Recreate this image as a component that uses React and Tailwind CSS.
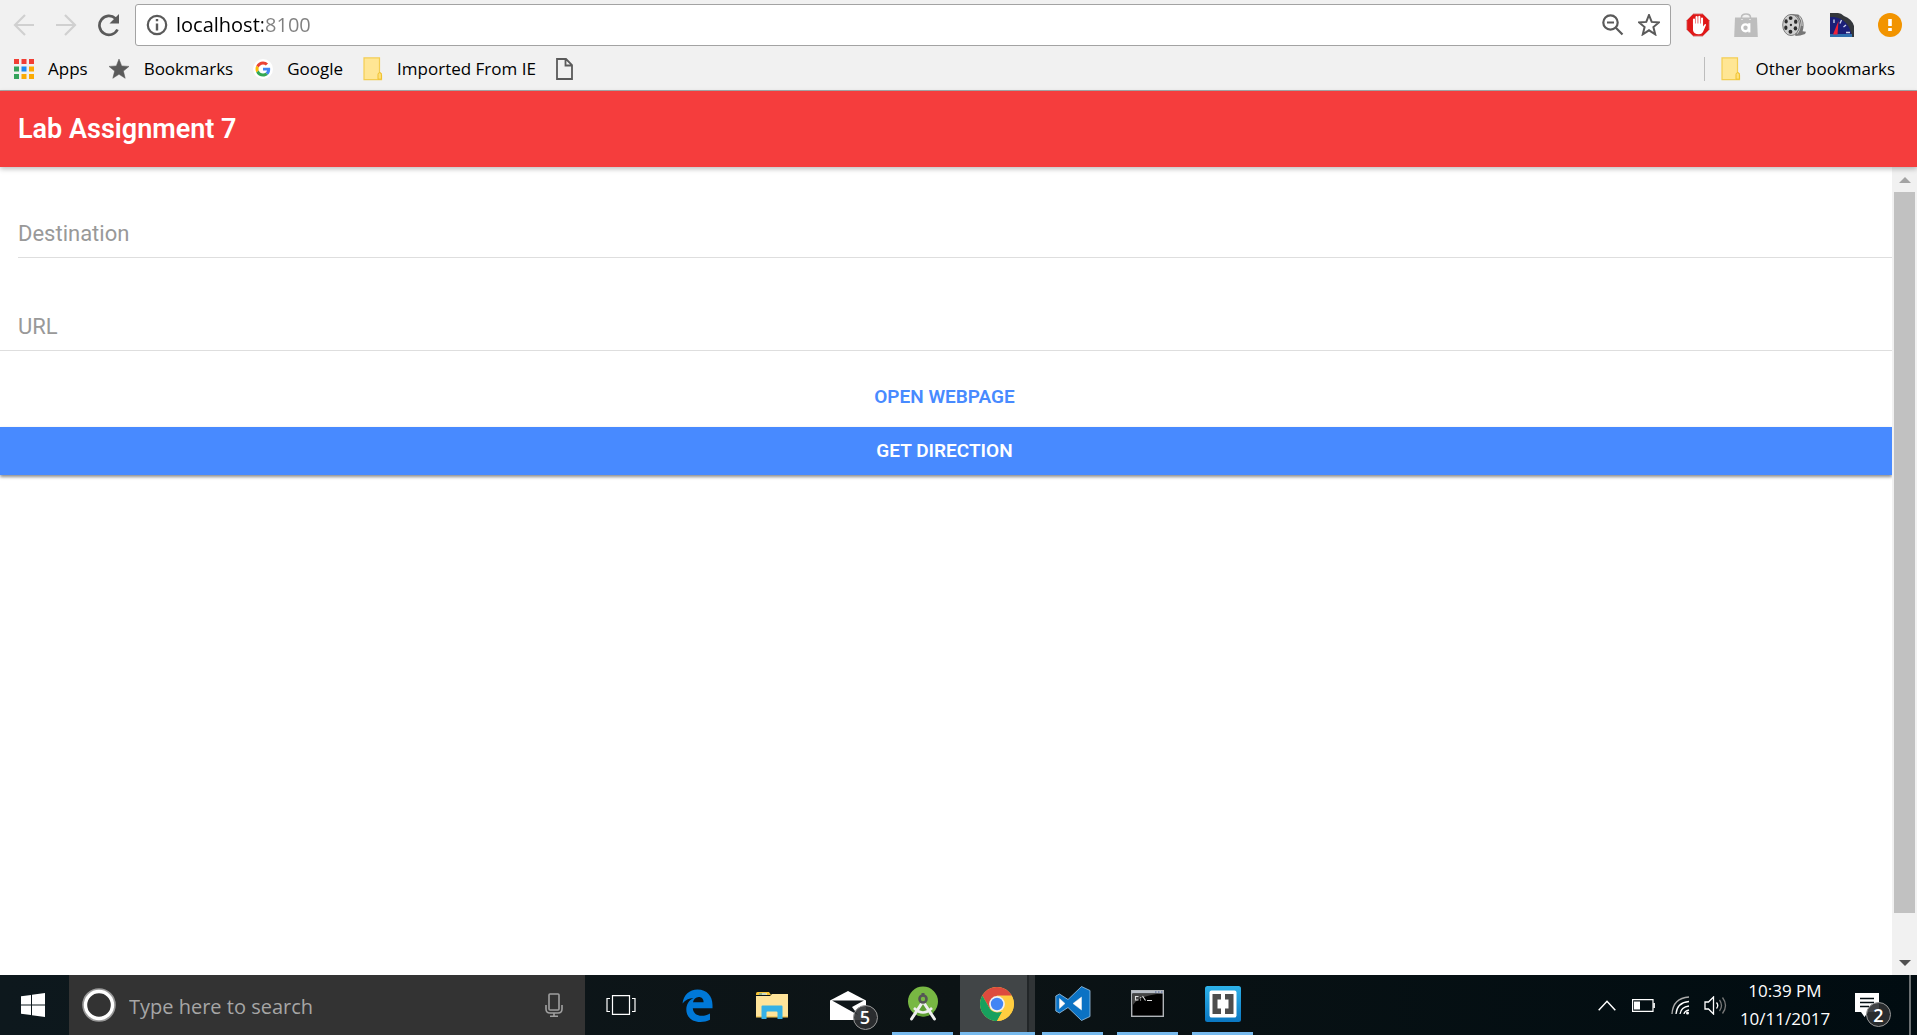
import React, { useState } from "react";

const UI = "font-['Open_Sans','Noto_Sans',sans-serif]";

function FolderIcon() {
  return (
    <svg width="20" height="24" viewBox="0 0 20 26" preserveAspectRatio="none" className="shrink-0">
      <path d="M1 1h15.500v16q2 0 2 3v4.500h-17.500z" fill="#ffe694" stroke="#f3cd52" strokeWidth="1.200" />
      <path d="M15 24v-5q0-2 1.700-2t1.700 2v5z" fill="#ffe07a" stroke="#eebf2b" />
    </svg>
  );
}

function BackIcon({ flip }) {
  return (
    <svg width="22" height="24" viewBox="0 0 22 24" className={flip ? "-scale-x-100" : ""} fill="none" stroke="#d0d0d0" strokeWidth="2.200">
      <path d="M21 12H2M12 2 2 12l10 10" />
    </svg>
  );
}

function ReloadIcon() {
  return (
    <svg width="24" height="24" viewBox="0 0 24 24">
      <path d="M20.500 16.500A9.500 9.500 0 1 1 18.500 5.500" fill="none" stroke="#5a5a5a" strokeWidth="2.700" />
      <path d="M22 1v9.500h-9.500z" fill="#5a5a5a" />
    </svg>
  );
}

function InfoIcon() {
  return (
    <svg width="22" height="22" viewBox="0 0 22 22" className="shrink-0" fill="none" stroke="#5a5a5a" strokeWidth="2.200">
      <circle cx="11" cy="11" r="9.200" />
      <path d="M11 9.500v7M11 5v2.300" strokeWidth="2.400" />
    </svg>
  );
}

function ZoomOutIcon() {
  return (
    <svg width="22" height="22" viewBox="0 0 22 22" fill="none" stroke="#5a5a5a" strokeWidth="2.200">
      <circle cx="8.500" cy="8.500" r="7.200" />
      <path d="M5 8.500h7M13.800 13.800l6.700 6.700" />
    </svg>
  );
}

const STAR = "M11 1l2.700 6.900 7.300.5-5.600 4.700 1.800 7.200L11 16.300l-6.200 4 1.800-7.200L1 8.400l7.300-.5z";

function StarIcon({ filled }) {
  return (
    <svg width="22" height="22" viewBox="0 0 22 22" className="shrink-0">
      <path d={STAR} fill={filled ? "#5a5a5a" : "none"} stroke="#5a5a5a" strokeWidth={filled ? 0.5 : 2} />
    </svg>
  );
}

function AppsIcon() {
  const colors = ["#f23e34", "#f23e34", "#f23e34", "#34a35b", "#1e88f0", "#fbab05", "#34a35b", "#fbab05", "#fbab05"];
  return (
    <svg width="20" height="20" viewBox="0 0 20 20" className="shrink-0">
      {colors.map((c, i) => (
        <rect key={i} x={(i % 3) * 7.500} y={Math.floor(i / 3) * 7.500} width="5" height="5" fill={c} />
      ))}
    </svg>
  );
}

function GoogleIcon() {
  return (
    <svg width="20" height="20" viewBox="0 0 48 48" className="shrink-0">
      <circle cx="24" cy="24" r="24" fill="#fff" />
      <g transform="translate(6 6) scale(.75)">
        <path fill="#EA4335" d="M24 9.500c3.500 0 6.700 1.200 9.200 3.600l6.900-6.900C35.900 2.400 30.500 0 24 0 14.600 0 6.500 5.400 2.600 13.200l8 6.200C12.400 13.700 17.700 9.500 24 9.500z" />
        <path fill="#4285F4" d="M47 24.500c0-1.600-.2-3.100-.4-4.500H24v9h12.900c-.6 3-2.300 5.500-4.800 7.200l7.700 6C44.400 38 47 31.800 47 24.500z" />
        <path fill="#FBBC05" d="M10.500 28.600c-.5-1.500-.8-3-.8-4.600s.3-3.100.8-4.600l-8-6.200C.9 16.500 0 20.100 0 24s.9 7.500 2.600 10.800z" />
        <path fill="#34A853" d="M24 48c6.500 0 11.900-2.100 15.900-5.800l-7.700-6c-2.200 1.400-4.900 2.300-8.200 2.300-6.300 0-11.600-4.200-13.500-9.900l-8 6.200C6.500 42.600 14.600 48 24 48z" />
      </g>
    </svg>
  );
}

function PageIcon() {
  return (
    <svg width="17" height="22" viewBox="0 0 17 22" fill="none" stroke="#5a5a5a" strokeWidth="1.800">
      <path d="M1 1h9l6 6v14H1zM9.500 1v6.500H16" />
    </svg>
  );
}

function BlockerIcon() {
  return (
    <svg width="24" height="24" viewBox="0 0 24 24">
      <path d="M7.200.8h9.600l6.500 6.500v9.400l-6.500 6.500H7.200L.7 16.700V7.300z" fill="#e01818" stroke="#d9b0b0" strokeWidth=".8" />
      <path d="M8 12V6.500M10.600 11V4M13.300 11V3.800M16 12V5.500" stroke="#fff" strokeWidth="2.100" strokeLinecap="round" />
      <path d="M7 10.500h10v3l1.500-2q1.300-.9 1.600.3l-2.800 6.500q-1.200 3-4.400 3-5.300 0-5.900-4z" fill="#fff" />
    </svg>
  );
}

function BagIcon() {
  return (
    <svg width="24" height="24" viewBox="0 0 24 24">
      <path d="M7.500 7V4.500q0-3.500 4.500-3.500t4.500 3.500V7" fill="none" stroke="#bdbdbd" strokeWidth="1.600" />
      <path d="M1 4.500h22l.8 19.500H.2z" fill="#bdbdbd" />
      <path d="M7.500 6.500h1M15.500 6.500h1" stroke="#fff" strokeWidth="1.200" />
      <circle cx="11.500" cy="14.800" r="3.400" fill="none" stroke="#fff" strokeWidth="2.400" />
      <path d="M15.300 10.200v9.200" stroke="#fff" strokeWidth="2.200" />
    </svg>
  );
}

function ReelIcon() {
  return (
    <svg width="24" height="24" viewBox="0 0 25 24">
      <path d="M9 .5 17 1q5.500 4 5.500 11 0 4-1 6.500l3.500.5-1 2.500q-5 2-10 2z" fill="#777" />
      <path d="M15 3q4 4 4 9t-3 9M18 3q3.500 4 3 10" fill="none" stroke="#ddd" />
      <ellipse cx="9.500" cy="12" rx="8.800" ry="11" fill="#cfcfcf" stroke="#777" />
      <g fill="#2b2b2b">
        <ellipse cx="9" cy="4.800" rx="2" ry="2" />
        <ellipse cx="14.300" cy="8.500" rx="1.800" ry="2.300" />
        <ellipse cx="14" cy="15.500" rx="1.800" ry="2.300" />
        <ellipse cx="8.800" cy="19" rx="2" ry="2" />
        <ellipse cx="4" cy="14.800" rx="1.700" ry="2.300" />
        <ellipse cx="4.300" cy="8.300" rx="1.700" ry="2.200" />
        <circle cx="9.300" cy="12" r="1.200" />
      </g>
    </svg>
  );
}

function GaugeIcon() {
  return (
    <svg width="24" height="24" viewBox="0 0 24 24">
      <path d="M0 0h8q3 0 6 3 8 3 10 10v11H0z" fill="#34373c" />
      <path d="M0 4h4q15 2 18 20H0z" fill="#1b1f78" />
      <path d="M0 21h22v3H0z" fill="#2f6fae" />
      <path d="M4 6.500v3.500M11.500 7 10 10.500M16 12l-2.500 2M20 19.500h-4" stroke="#cfd6ee" strokeWidth="1.300" />
      <path d="M8.500 8 3 21.500h4.500z" fill="#f02038" />
    </svg>
  );
}

function AlertIcon() {
  return (
    <svg width="24" height="24" viewBox="0 0 24 24">
      <circle cx="12" cy="12" r="12" fill="#f29400" />
      <path d="M12 6v7M12 15v3" stroke="#fff" strokeWidth="3.600" />
    </svg>
  );
}

function IconButton({ label, className = "", children }) {
  return (
    <button type="button" aria-label={label} className={`flex shrink-0 items-center justify-center ${className}`}>
      {children}
    </button>
  );
}

function Bookmark({ icon, children }) {
  return (
    <a href="#" className="flex items-center gap-3.5 whitespace-nowrap">
      {icon}
      {children}
    </a>
  );
}

function BrowserChrome() {
  const [url, setUrl] = useState("localhost:8100");
  return (
    <header className={`border-b border-[#a9a9a9] bg-[#f1f1f1] text-black ${UI}`}>
      <div className="flex h-[50px] items-center pr-[15px] pl-[13px]">
        <IconButton label="Back" className="w-[22px]"><BackIcon /></IconButton>
        <IconButton label="Forward" className="ml-5 w-[22px]"><BackIcon flip /></IconButton>
        <IconButton label="Reload" className="ml-5 w-6"><ReloadIcon /></IconButton>
        <div className="ml-3.5 flex h-[42px] flex-1 items-center rounded-[3px] border border-[#a3a3a3] bg-white px-2.5">
          <InfoIcon />
          <input
            aria-label="Address"
            value={url}
            onChange={(e) => setUrl(e.target.value)}
            className="ml-2 min-w-0 flex-1 bg-[linear-gradient(90deg,#000_0_87px,#808080_87px)] bg-clip-text text-[20px] text-transparent outline-none"
          />
          <IconButton label="Zoom"><ZoomOutIcon /></IconButton>
          <IconButton label="Bookmark this page" className="ml-3.5"><StarIcon /></IconButton>
        </div>
        <div className="ml-[15px] flex items-center gap-6">
          <IconButton label="Ad blocker"><BlockerIcon /></IconButton>
          <IconButton label="Shopping assistant"><BagIcon /></IconButton>
          <IconButton label="Video downloader"><ReelIcon /></IconButton>
          <IconButton label="Speed dial"><GaugeIcon /></IconButton>
          <IconButton label="Menu"><AlertIcon /></IconButton>
        </div>
      </div>
      <nav aria-label="Bookmarks" className="flex h-10 items-center gap-5 pr-[22px] pb-0.5 pl-3.5 text-[17px]">
        <Bookmark icon={<AppsIcon />}>Apps</Bookmark>
        <Bookmark icon={<StarIcon filled />}>Bookmarks</Bookmark>
        <Bookmark icon={<GoogleIcon />}>Google</Bookmark>
        <Bookmark icon={<FolderIcon />}>Imported From IE</Bookmark>
        <a href="#" aria-label="Untitled bookmark"><PageIcon /></a>
        <div className="ml-auto flex items-center gap-4">
          <div className="h-6 w-px bg-[#bdbdbd]" />
          <Bookmark icon={<FolderIcon />}>Other bookmarks</Bookmark>
        </div>
      </nav>
    </header>
  );
}

function Scrollbar() {
  return (
    <div className="flex w-[25px] shrink-0 flex-col items-center bg-[#f1f1f1]">
      <button type="button" aria-label="Scroll up" className="flex h-[25px] w-full items-center justify-center">
        <svg width="12" height="6" viewBox="0 0 12 6"><path d="M0 6 6 0l6 6z" fill="#a3a3a3" /></svg>
      </button>
      <div className="flex w-full flex-1 flex-col px-0.5">
        <div className="grow-[721] bg-[#c1c1c1]" />
        <div className="grow-[37]" />
      </div>
      <button type="button" aria-label="Scroll down" className="flex h-[25px] w-full items-center justify-center">
        <svg width="12" height="6" viewBox="0 0 12 6"><path d="M0 0h12L6 6z" fill="#505050" /></svg>
      </button>
    </div>
  );
}

const FIELD = "h-12 w-full bg-transparent text-[22px] text-black outline-none placeholder:text-[#999] placeholder:opacity-100";

function Page() {
  return (
    <div className="flex min-h-0 flex-1 flex-col bg-white font-[Roboto,sans-serif]">
      <div className="z-10 flex h-[76px] shrink-0 items-center bg-[#f53d3d] px-[18px] shadow-[0_2px_5px_rgba(0,0,0,0.26)]">
        <h1 className="text-[27px] font-semibold text-white">Lab Assignment 7</h1>
      </div>
      <div className="flex min-h-0 flex-1">
        <main className="min-w-0 flex-1 pt-[42px]">
          <div className="pl-[18px]">
            <div className="border-b border-[#dedede]">
              <input aria-label="Destination" placeholder="Destination" className={FIELD} />
            </div>
          </div>
          <div className="mt-11 border-b border-[#dedede] pl-[18px]">
            <input aria-label="URL" placeholder="URL" className={FIELD} />
          </div>
          <button type="button" className="mt-[22px] flex h-12 w-full items-center justify-center pr-[3px] text-[19px] font-semibold text-[#488aff]">
            OPEN WEBPAGE
          </button>
          <button type="button" className="mt-1.5 flex h-12 w-full items-center justify-center bg-[#488aff] pr-[3px] text-[19px] font-semibold text-white shadow-[0_2px_3px_rgba(0,0,0,0.45)]">
            GET DIRECTION
          </button>
        </main>
        <Scrollbar />
      </div>
    </div>
  );
}

function Badge({ children }) {
  return (
    <span className="absolute -right-3 -bottom-2.5 flex size-[25px] items-center justify-center rounded-full border border-[#999] bg-[#2d3032]/90 text-lg leading-none font-semibold text-white">
      {children}
    </span>
  );
}

function TaskButton({ label, open, active, children }) {
  return (
    <button type="button" aria-label={label} className="flex w-[75px] shrink-0 flex-col">
      <span className={active ? "flex w-full flex-1 bg-[#303436]" : "flex w-full flex-1"}>
        <span className={active ? "mr-1.5 flex flex-1 items-center justify-center border-r-2 border-[#222628] bg-[#414547] pl-1.5" : "flex flex-1 items-center justify-center"}>
          {children}
        </span>
      </span>
      {open && <span className={active ? "h-[3px] w-full bg-[#76b9ed]" : "mx-auto h-[3px] w-[61px] bg-[#76b9ed]"} />}
    </button>
  );
}

function WindowsIcon() {
  return (
    <svg width="24" height="24" viewBox="0 0 24 24" fill="#fff">
      <path d="M0 3.300 10 2v9.500H0zM11 1.800 24 0v11.500H11zM0 12.500h10V22L0 20.700zM11 12.500h13V24l-13-1.800z" />
    </svg>
  );
}

function MicIcon() {
  return (
    <svg width="18" height="24" viewBox="0 0 18 24" fill="none" stroke="#a0a0a0" strokeWidth="1.600">
      <rect x="4" y="1" width="10" height="16" rx="1" />
      <path d="M1 12v4q0 4 4 4h8q4 0 4-4v-4M9 20v3M5 23.200h8" />
    </svg>
  );
}

function TaskViewIcon() {
  return (
    <svg width="30" height="20" viewBox="0 0 30 20" fill="none" stroke="#fff" strokeWidth="1.200">
      <path d="M6.500.6h17v18.800h-17zM4 3.500H1v13h3M26 3.500h3v13h-3" />
    </svg>
  );
}

function EdgeIcon() {
  return (
    <svg width="31" height="33" viewBox="0 0 31 33">
      <path d="M.5 14.500C1.500 6 7.500.5 15.500.5 25 .5 30.500 7 30.500 16v3.200H10.800c.3 5 4.200 7.600 8.900 7.600 3 0 5.700-.8 8.300-2.300v6.300c-3 1.500-6.200 2.200-9.700 2.200C10 33 4.300 28 4.300 20.500c0-5 2.600-9.200 7.200-11.500C6.800 9.200 3.200 11 .5 14.500zM11 13.200h10.600c0-3.200-1.600-5.300-4.900-5.300-3 0-5 2.100-5.700 5.300z" fill="#0078d7" />
    </svg>
  );
}

function ExplorerIcon() {
  return (
    <svg width="33" height="27" viewBox="0 0 33 27">
      <path d="M0 1.500Q0 0 1.500 0H13l2 3H0z" fill="#f8c535" />
      <path d="M3 2h7" stroke="#3ba7d8" />
      <path d="M6 2h5" stroke="#fff" />
      <path d="M0 4h14l2-2h16v23H0z" fill="#ffe49a" />
      <path d="M0 24h32v1.500H0z" fill="#f4cc63" />
      <path d="M5.500 14.500q0-1 1-1h19q1 0 1 1V27h-5v-6.500q0-1-1-1h-9q-1 0-1 1V27h-5z" fill="#35b1e6" />
    </svg>
  );
}

function MailIcon() {
  return (
    <svg width="36" height="29" viewBox="0 0 36 29">
      <path d="M0 9.500 18 0l18 9.500V29H0z" fill="#fff" />
      <path d="M2 9.500h32l-12 6.500 6 8z" fill="#10171a" />
    </svg>
  );
}

function AndroidStudioIcon() {
  return (
    <svg width="32" height="35" viewBox="0 0 32 35">
      <circle cx="16" cy="15.500" r="15" fill="#78b843" />
      <path d="M16 15.500 27 26A15 15 0 0 1 8 28z" fill="#5f9f33" />
      <path d="M15 17 4.500 33M17 17l10.500 16" stroke="#eee" strokeWidth="3" strokeLinecap="round" />
      <path d="M7 22q9 9 18 0" fill="none" stroke="#eee" strokeWidth="2.500" />
      <path d="M14.500 7h3v4h-3z" fill="#555" />
      <circle cx="16" cy="13" r="3.500" fill="#78b843" stroke="#555" strokeWidth="2.600" />
    </svg>
  );
}

function ChromeIcon() {
  return (
    <svg width="34" height="34" viewBox="0 0 34 34">
      <circle cx="17" cy="17" r="17" fill="#ffcd40" />
      <path d="M2.300 8.500A17 17 0 0 1 31.700 8.500H17L9.600 21.300z" fill="#dd4b3e" />
      <path d="M2.300 8.500 9.600 21.300Q12 25 17 25.500l5-.5L17 34A17 17 0 0 1 2.300 8.500z" fill="#17a05e" />
      <path d="M17 9h14.900A17 17 0 0 1 17 34l7.400-12.700z" fill="#ffcd40" />
      <circle cx="17" cy="17" r="7.900" fill="#f1f1f1" />
      <circle cx="17" cy="17" r="6.200" fill="#4285f4" />
    </svg>
  );
}

function CodeIcon() {
  return (
    <svg width="36" height="35" viewBox="0 0 36 35">
      <path fillRule="evenodd" d="M26.500.5 35 4.500v26l-8.500 4L13 21.500l-8.500 5.500L.8 25V10l3.700-2L13 13.500zM4.500 12.500v10L10 17.500zM26.500 11 18 17.500l8.500 6.500z" fill="#0b72c4" stroke="#9ec7e6" strokeWidth=".8" />
      <path d="M4.500 12.500v10L10 17.500zM26.500 11 18 17.500l8.500 6.500z" fill="#fff" />
    </svg>
  );
}

function TerminalIcon() {
  return (
    <svg width="33" height="27" viewBox="0 0 33 27">
      <rect x=".7" y=".7" width="31.600" height="25.600" fill="#000" stroke="#b0b4b8" strokeWidth="1.400" />
      <path d="M1 1h31v2.500H1z" fill="#b7bdc6" />
      <path d="M1.500 3.500H30Q6 6 1.500 16z" fill="#444" />
      <path d="M7.500 6.500H4.500v3.500h3M9.500 7.200v1M9.500 9.500v1M11.500 6l3 4.500M16 10.500h5" fill="none" stroke="#ddd" strokeWidth="1.100" />
      <path d="M24 2h1.500M27 2h1.500M30 2h1.500" stroke="#445a90" strokeWidth="1.200" />
    </svg>
  );
}

function BracketsIcon() {
  return (
    <svg width="36" height="36" viewBox="0 0 36 36">
      <defs>
        <linearGradient id="brackets" x1="0" y1="0" x2="0" y2="1">
          <stop offset="0" stopColor="#2db2ea" />
          <stop offset="1" stopColor="#0a77c2" />
        </linearGradient>
      </defs>
      <rect width="36" height="36" rx="2.500" fill="url(#brackets)" />
      <rect x="4.500" y="4.500" width="27" height="27" rx="2" fill="#fff" />
      <path d="M7.500 8H16v5.500h-3.500v9H16V28H7.500zM28.500 8H20v5.500h3.500v9H20V28h8.500z" fill="#4d4d4d" />
    </svg>
  );
}

function ActionCenterIcon() {
  return (
    <svg width="24" height="24" viewBox="0 0 24 24">
      <path d="M0 0h24v19H13l-3.500 5L6 19H0z" fill="#fff" />
      <path d="M5 5.500h14M5 9.500h14M5 13.500h9" stroke="#030d12" strokeWidth="1.300" />
    </svg>
  );
}

function Taskbar() {
  return (
    <footer className={`flex h-[60px] shrink-0 items-stretch bg-linear-to-r from-[#0d181d] via-[#0c1315] to-[#010c11] text-white ${UI}`}>
      <IconButton label="Start" className="w-[69px] pr-1"><WindowsIcon /></IconButton>
      <div className="flex w-[516px] shrink-0 items-center bg-[#333] pr-[22px] pl-[13px]">
        <svg width="34" height="34" viewBox="0 0 34 34" fill="none" className="shrink-0">
          <circle cx="17" cy="17" r="15.800" stroke="#999" strokeWidth="2" />
          <circle cx="17" cy="17" r="13.500" stroke="#fff" strokeWidth="3.400" />
        </svg>
        <input aria-label="Search" placeholder="Type here to search" className="ml-[13px] min-w-0 flex-1 bg-transparent pt-1 text-[20px] text-white outline-none placeholder:text-[#a6a6a6]" />
        <IconButton label="Voice search"><MicIcon /></IconButton>
      </div>
      <div className="flex">
        <TaskButton label="Task view"><span className="pr-1"><TaskViewIcon /></span></TaskButton>
      </div>
      <TaskButton label="Edge"><EdgeIcon /></TaskButton>
      <TaskButton label="File Explorer"><ExplorerIcon /></TaskButton>
      <TaskButton label="Mail">
        <span className="relative"><MailIcon /><Badge>5</Badge></span>
      </TaskButton>
      <TaskButton label="Android Studio" open><AndroidStudioIcon /></TaskButton>
      <TaskButton label="Chrome" open active><ChromeIcon /></TaskButton>
      <TaskButton label="Visual Studio Code" open><CodeIcon /></TaskButton>
      <TaskButton label="Command Prompt" open><TerminalIcon /></TaskButton>
      <TaskButton label="Brackets" open><BracketsIcon /></TaskButton>
      <div className="ml-auto flex items-center">
        <IconButton label="Show hidden icons">
          <svg width="18" height="11" viewBox="0 0 18 11" fill="none" stroke="#fff" strokeWidth="1.500"><path d="m.7 10.300 8.300-9 8.300 9" /></svg>
        </IconButton>
        <IconButton label="Battery" className="ml-4">
          <svg width="23" height="13" viewBox="0 0 23 13" fill="none" stroke="#fff" strokeWidth="1.200"><path d="M.6.600h20.400v11.800H.6zM22.300 4v5" /><path d="M2 2.500h6v8H2z" fill="#fff" stroke="none" /></svg>
        </IconButton>
        <IconButton label="Network" className="ml-4">
          <svg width="19" height="19" viewBox="0 0 19 19" fill="none" stroke="#fff" strokeWidth="1.300">
            <path d="M1 18Q2 2 18 1" stroke="#aaa" /><path d="M5 18Q6 6.500 18 5.500M9 18q1-7 9-8M13 18q.5-3 5-4" />
            <circle cx="16.500" cy="17" r="1.500" fill="#fff" stroke="none" />
          </svg>
        </IconButton>
        <IconButton label="Volume" className="ml-3.5">
          <svg width="23" height="19" viewBox="0 0 23 19" fill="none" stroke="#fff" strokeWidth="1.300">
            <path d="M1 6h3.500L9.500 1v17l-5-5H1z" /><path d="M12.500 6.500q2.500 3 0 6" /><path d="M15.500 4q4 5.500 0 11M18.500 1.500q6 8 0 16" stroke="#777" />
          </svg>
        </IconButton>
        <time className="ml-1 flex w-[108px] flex-col items-center text-[17px] leading-[28px]">
          <span>10:39 PM</span>
          <span>10/11/2017</span>
        </time>
        <IconButton label="Notifications" className="ml-4">
          <span className="relative"><ActionCenterIcon /><Badge>2</Badge></span>
        </IconButton>
        <div className="mr-1.5 ml-[30px] h-[60px] w-0.5 bg-[#6b7072]" />
      </div>
    </footer>
  );
}

export default function App() {
  return (
    <div className="flex h-screen flex-col overflow-hidden">
      <BrowserChrome />
      <Page />
      <Taskbar />
    </div>
  );
}
